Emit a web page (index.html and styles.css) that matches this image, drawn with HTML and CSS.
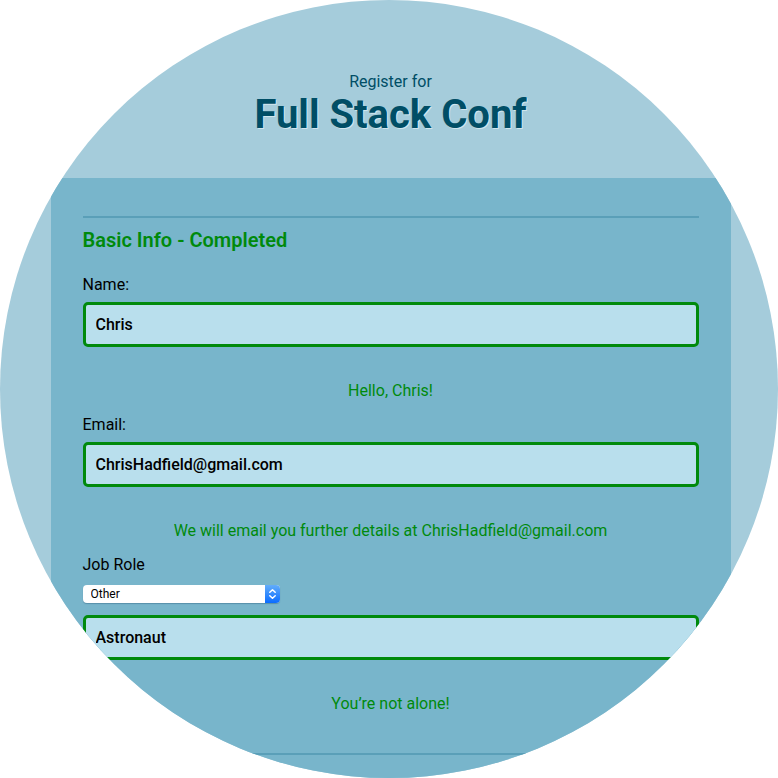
FILE: index.html
```
<!DOCTYPE html>
<html lang="en">
<head>
  <meta charset="utf-8">
  <meta name="viewport" content="width=device-width, initial-scale=1">
  <title>Full Stack Conf</title>
  <link rel="stylesheet" href="styles.css">
</head>
<body>
  <main class="page">
    <header class="header">
      <p class="kicker">Register for</p>
      <h1 class="title">Full Stack Conf</h1>
    </header>
    <form class="panel">
      <section class="section">
        <h2 class="section-title">Basic Info - Completed</h2>
        <div class="field">
          <label for="name">Name:</label>
          <input class="text-input" id="name" type="text" value="Chris">
          <p class="message">Hello, Chris!</p>
        </div>
        <div class="field">
          <label for="email">Email:</label>
          <input class="text-input" id="email" type="email" value="ChrisHadfield@gmail.com">
          <p class="message">We will email you further details at ChrisHadfield@gmail.com</p>
        </div>
        <div class="field">
          <label for="role">Job Role</label>
          <div class="select">
            <select id="role">
              <option selected>Other</option>
            </select>
            <svg class="select-arrows" viewBox="0 0 15 18" aria-hidden="true">
              <path d="M4.8 7.2 7.5 4.7l2.7 2.5M4.8 10.8l2.7 2.5 2.7-2.5"/>
            </svg>
          </div>
          <input class="text-input" type="text" value="Astronaut" aria-label="Other job role">
          <p class="message">You’re not alone!</p>
        </div>
      </section>
      <section class="section"></section>
    </form>
  </main>
</body>
</html>
```
FILE: styles.css
```
* {
  box-sizing: border-box;
}

body {
  margin: 0;
  background: #fff;
  color: #000;
  font: 16px/20px Roboto, "Liberation Sans", sans-serif;
}

h1,
h2,
p {
  margin: 0;
}

.page {
  aspect-ratio: 1;
  padding: 72px 0 0 3px;
  overflow: hidden;
  border-radius: 50%;
  background: #a5ccdb;
}

.header {
  margin-bottom: 40px;
  color: #004e66;
  text-align: center;
}

.title {
  font-size: 40px;
  font-weight: 700;
  line-height: 46px;
  text-shadow: 1px 1px 0 #d0e6ee;
}

.panel {
  max-width: 680px;
  margin: 0 auto;
  padding: 38px 32px 200px;
  background: #78b5cb;
}

.section {
  border-top: 2px solid #5a9fb8;
  padding-top: 10px;
}

.section-title {
  margin-bottom: 23px;
  color: #008a0c;
  font-size: 20px;
  font-weight: 600;
  line-height: 24px;
}

.field {
  display: flex;
  flex-direction: column;
  margin-bottom: 14px;
}

.field:last-child {
  margin-bottom: 39px;
}

.text-input {
  width: 100%;
  height: 45px;
  margin: 7px 0 34px;
  padding: 0 10px;
  border: 3px solid #008a0c;
  border-radius: 5px;
  outline: 0;
  background: #b9dfed;
  color: #000;
  font: inherit;
  font-weight: 500;
}

.message {
  color: #008a0c;
  text-align: center;
}

.select {
  position: relative;
  width: 197px;
  height: 18px;
  margin: 10px 0 5px;
}

.select select {
  display: block;
  width: 100%;
  height: 100%;
  padding: 0 20px 0 8px;
  border: 0;
  border-radius: 4px;
  appearance: none;
  background: #fff;
  box-shadow: 0 1px 1px rgba(40, 90, 120, 0.4);
  color: #000;
  font: 12px/18px Roboto, sans-serif;
}

.select-arrows {
  position: absolute;
  top: 0;
  right: 0;
  width: 15px;
  height: 18px;
  border-radius: 0 4px 4px 0;
  background: linear-gradient(#62adfa, #0a6cff);
  fill: none;
  stroke: #fff;
  stroke-linecap: round;
  stroke-linejoin: round;
  stroke-width: 1.5;
  pointer-events: none;
}
```
